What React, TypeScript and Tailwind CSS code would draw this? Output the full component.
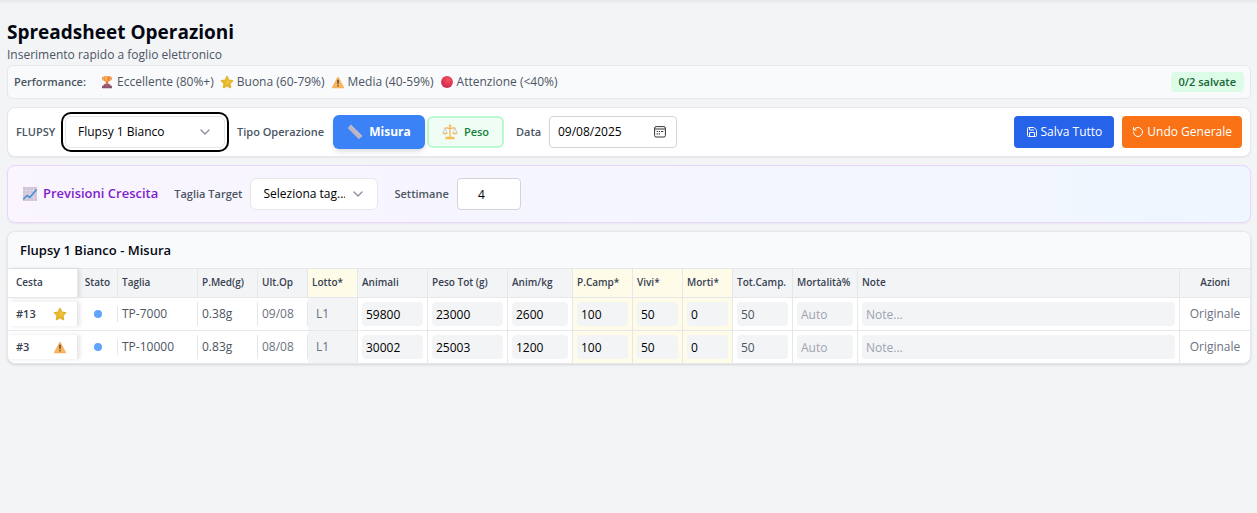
import type { ReactNode, SelectHTMLAttributes } from "react";
import { ChevronDown, RotateCcw, Save } from "lucide-react";

const Trophy = () => (
  <svg viewBox="0 0 16 16" className="size-3.5 shrink-0" aria-hidden="true">
    <path d="M4.500 3.200H2.800c0 1.800.8 2.800 2.600 3M11.500 3.200h1.700c0 1.800-.8 2.800-2.600 3" fill="none" stroke="#f08a3c" strokeWidth="1.200" />
    <path d="M4 1.500h8c0 4-1 6-3.200 6.600H7.200C5 7.500 4 5.500 4 1.500Z" fill="#f08a3a" />
    <path d="M5.200 2h3v5C6.200 6.500 5.200 4.800 5.200 2Z" fill="#ffb84a" />
    <path d="M7 8h2l1.200 3.200H5.800Z" fill="#e0703c" />
    <path d="M4.200 10.600h7.600v1.700h1.900V15H2.300v-2.700h1.900Z" fill="#8a5070" />
    <path d="M6.200 12h3.600v1.200H6.200Z" fill="#b87070" />
  </svg>
);

const StarIcon = () => (
  <svg viewBox="0 0 16 16" className="size-3.5 shrink-0" aria-hidden="true">
    <path
      d="M8 1.900l1.900 4.100 4.400.6-3.200 3.100.8 4.500L8 12.100l-3.900 2.100.8-4.500L1.700 6.600 6.100 6Z"
      fill="#e9bd2f"
      stroke="#e3b32e"
      strokeWidth="1.900"
      strokeLinejoin="round"
    />
    <path d="M8 3l1.300 3.500 3.500.6-3 2.400L8 9Z" fill="#efc63c" />
  </svg>
);

const Warning = () => (
  <svg viewBox="0 0 16 16" className="size-3.5 shrink-0" aria-hidden="true">
    <path d="M8 2.600l6.300 11.800H1.700Z" fill="#fbb55c" stroke="#f8b05c" strokeWidth="1.200" strokeLinejoin="round" />
    <path d="M7.100 5.500h1.800l-.3 5h-1.200Z" fill="#4a3b3b" />
    <circle cx="8" cy="12.200" r=".9" fill="#4a3b3b" />
  </svg>
);

const RedDot = () => (
  <svg viewBox="0 0 16 16" className="size-3.5 shrink-0" aria-hidden="true">
    <defs>
      <radialGradient id="red-dot" cx=".6" cy=".3" r=".8">
        <stop offset="0" stopColor="#f4505f" />
        <stop offset="1" stopColor="#c9234f" />
      </radialGradient>
    </defs>
    <circle cx="8" cy="8" r="6.800" fill="url(#red-dot)" />
  </svg>
);

const Ruler = () => (
  <svg viewBox="0 0 16 16" className="size-4 shrink-0" aria-hidden="true">
    <path d="M3.900.8 15.300 12l-3.400 3.300L.6 4Z" fill="#bcb4c6" />
    <path d="M3.900.8 15.300 12l-1 .9L3 1.700Z" fill="#c6bfcf" />
    <path d="M5 3.700l1-1M7 5.600l1-1M9 7.600l1-1M11 9.600l1-1M13 11.500l1-1" stroke="#a398ae" strokeWidth=".5" />
  </svg>
);

const Scales = () => (
  <svg viewBox="0 0 16 16" className="size-4 shrink-0" aria-hidden="true">
    <path d="M7.300 2h1.400v11H7.300Z" fill="#f5bb62" />
    <circle cx="8" cy="1.800" r="1.300" fill="#f7c164" />
    <path d="M2.500 4.200C5 3 6.500 4.800 8 4.300c1.500.5 3-1.300 5.500-.1" fill="none" stroke="#f0b35c" strokeWidth="1.100" />
    <path d="M3 4.200.9 9M3 4.200 5.300 9M13 4.200 10.700 9M13 4.200 15.100 9" fill="none" stroke="#c0b4bb" strokeWidth=".7" />
    <path d="M.3 8.800h5.500c-.4 2.300-5.100 2.300-5.500 0ZM10.200 8.800h5.500c-.4 2.300-5.100 2.300-5.500 0Z" fill="#f3b667" />
    <path d="M4 12.800h8l1 2.400H3Z" fill="#f9bd54" />
  </svg>
);

const Chart = () => (
  <svg viewBox="0 0 16 16" className="size-4 shrink-0" aria-hidden="true">
    <rect x="1" y="1" width="14" height="14" fill="#cfc4da" />
    <path d="M1 4.500h14M1 8h14M1 11.500h14M4.500 1v14M8 1v14M11.500 1v14" stroke="#e2d9e8" strokeWidth=".7" />
    <path d="M1.200 13.300 5.200 9.500l2.600 1.900L14.600 3.500" fill="none" stroke="#3b8fd0" strokeWidth="1.500" />
  </svg>
);

const Calendar = () => (
  <svg viewBox="0 0 12 12" className="size-3" aria-hidden="true">
    <rect x=".6" y=".6" width="10.800" height="10.400" rx="1.500" fill="none" stroke="#333" strokeWidth="1" />
    <path d="M.6 3h10.800" stroke="#333" strokeWidth="1" />
    <path d="M2.700 5.500h1.200M4.800 5.500h1.200M7 5.500h2.200M2.700 7.900h1.200M4.800 7.900h1.200" stroke="#333" strokeWidth="1.100" />
  </svg>
);

type PickerProps = SelectHTMLAttributes<HTMLSelectElement> & { children: ReactNode };

function Picker({ className = "", children, ...rest }: PickerProps) {
  return (
    <span className="grid items-center">
      <select
        {...rest}
        className={`col-start-1 row-start-1 h-8 appearance-none rounded-md border border-[#e5e7eb] bg-white pl-3 pr-8 text-xs text-black outline-none ${className}`}
      >
        {children}
      </select>
      <ChevronDown
        aria-hidden="true"
        strokeWidth={2}
        className="pointer-events-none col-start-1 row-start-1 mr-3 size-4 justify-self-end text-gray-500/80"
      />
    </span>
  );
}

const legend = [
  { icon: <Trophy />, text: "Eccellente (80%+)" },
  { icon: <StarIcon />, text: "Buona (60-79%)" },
  { icon: <Warning />, text: "Media (40-59%)" },
  { icon: <RedDot />, text: "Attenzione (<40%)" },
];

const columns = [
  { label: "Cesta", col: "w-[70px]", th: "bg-white pl-2 shadow-[2px_0_4px_rgba(0,0,0,0.1)]" },
  { label: "Stato", col: "w-10", th: "text-center" },
  { label: "Taglia", col: "w-20", th: "pl-1" },
  { label: "P.Med(g)", col: "w-[60px]", th: "pl-1" },
  { label: "Ult.Op", col: "w-[50px]", th: "pl-1" },
  { label: "Lotto*", col: "w-[50px]", th: "bg-[#fefce8] pl-1" },
  { label: "Animali", col: "w-[70px]", th: "pl-1" },
  { label: "Peso Tot (g)", col: "w-20", th: "pl-1" },
  { label: "Anim/kg", col: "w-[65px]", th: "pl-1" },
  { label: "P.Camp*", col: "w-[60px]", th: "bg-[#fefce8] pl-1" },
  { label: "Vivi*", col: "w-[50px]", th: "bg-[#fefce8] pl-1" },
  { label: "Morti*", col: "w-[50px]", th: "bg-[#fefce8] pl-1" },
  { label: "Tot.Camp.", col: "w-[60px]", th: "pl-1" },
  { label: "Mortalità%", col: "w-[65px]", th: "pl-1" },
  { label: "Note", col: "", th: "pl-1" },
  { label: "Azioni", col: "w-[70px]", th: "text-center" },
];

const rows = [
  { id: "#13", icon: <StarIcon />, size: "TP-7000", avg: "0.38g", last: "09/08", lot: "L1", values: ["59800", "23000", "2600", "100", "50", "0", "50", "", ""] },
  { id: "#3", icon: <Warning />, size: "TP-10000", avg: "0.83g", last: "08/08", lot: "L1", values: ["30002", "25003", "1200", "100", "50", "0", "50", "", ""] },
];

const fields = [
  { label: "Animali", td: "", input: "text-black" },
  { label: "Peso totale", td: "", input: "text-black" },
  { label: "Animali per kg", td: "", input: "text-black" },
  { label: "Peso campione", td: "bg-[#fefce8]", input: "text-black" },
  { label: "Vivi", td: "bg-[#fefce8]", input: "text-black" },
  { label: "Morti", td: "bg-[#fefce8]", input: "text-black" },
  { label: "Totale campione", td: "", input: "text-[#4b5563]" },
  { label: "Mortalità", td: "", input: "text-[#4b5563]", placeholder: "Auto" },
  { label: "Note", td: "", input: "text-[#4b5563]", placeholder: "Note..." },
];

export default function App() {
  return (
    <div className="min-h-screen bg-[#f3f4f6] font-['Open_Sans','Noto_Sans',sans-serif] text-xs text-[#4b5563]">
      <div className="h-1 bg-linear-to-b from-[#e5e7eb] to-[#f3f4f6]" />
      <main className="flex flex-col gap-2 pt-4 pr-1.5 pl-[7px]">
        <div>
          <h1 className="text-[19px] leading-6 font-bold text-gray-950">Spreadsheet Operazioni</h1>
          <p className="pt-0.5 leading-[18px]">Inserimento rapido a foglio elettronico</p>
          <div className="mt-px flex h-[34px] items-center rounded-md border border-[#e5e7eb] bg-[#f9fafb] px-1.5">
            <span className="mr-3 w-[74px] text-[11px] font-semibold">Performance:</span>
            <ul className="flex gap-1.5">
              {legend.map((l) => (
                <li key={l.text} className="flex items-center gap-[3px]">
                  {l.icon}
                  {l.text}
                </li>
              ))}
            </ul>
            <span className="ml-auto rounded bg-[#dcfce7] px-2 text-[11px] leading-5 font-semibold text-[#166534]">0/2 salvate</span>
          </div>
        </div>

        <section className="flex h-[50px] items-center rounded-lg border border-[#e5e7eb] bg-white px-2 shadow-xs">
          <label htmlFor="flupsy" className="mr-2 w-[41px] text-[11px] font-semibold">FLUPSY</label>
          <Picker id="flupsy" className="w-40 ring-2 ring-black ring-offset-2">
            <option>Flupsy 1 Bianco</option>
          </Picker>
          <span className="mr-1.5 ml-3 w-[90px] text-[11px] font-semibold whitespace-nowrap">Tipo Operazione</span>
          <button className="flex h-[34px] w-[92px] items-center justify-center gap-1.5 rounded-md bg-[#3b82f6] font-bold text-white shadow-md">
            <Ruler />
            Misura
          </button>
          <button className="ml-0.5 flex h-8 w-[77px] items-center justify-center gap-1.5 rounded-md border-2 border-[#bbf7d0] bg-[#f0fdf4] text-[11px] font-semibold text-[#15803d]">
            <Scales />
            Peso
          </button>
          <label htmlFor="data" className="mr-1.5 ml-3 w-[27px] text-[11px] font-semibold">Data</label>
          <div className="flex h-8 w-32 items-center rounded border border-[#d1d5db] bg-white pr-2.5 pl-2">
            <input id="data" defaultValue="09/08/2025" className="min-w-0 flex-1 text-black outline-none" />
            <button aria-label="Apri calendario">
              <Calendar />
            </button>
          </div>
          <button className="ml-auto flex h-8 items-center gap-[3px] rounded bg-[#2563eb] px-3 text-white">
            <Save className="size-3" aria-hidden="true" />
            Salva Tutto
          </button>
          <button className="ml-2 flex h-8 items-center gap-[3px] rounded bg-[#f97316] px-2.5 text-white">
            <RotateCcw className="size-3" aria-hidden="true" />
            Undo Generale
          </button>
        </section>

        <section className="flex h-[58px] items-center rounded-lg border border-[#e9d5ff] bg-linear-to-r/srgb from-[#faf5ff] to-[#eff6ff] px-3.5 shadow-xs">
          <h2 className="mr-4 flex items-center gap-[5px] text-[13px] font-semibold text-[#7e22ce]">
            <Chart />
            Previsioni Crescita
          </h2>
          <label htmlFor="target" className="mr-2 text-[11px] font-semibold">Taglia Target</label>
          <Picker id="target" className="w-32">
            <option>Seleziona tag...</option>
          </Picker>
          <label htmlFor="weeks" className="mr-2 ml-4 text-[11px] font-semibold">Settimane</label>
          <input
            id="weeks"
            type="number"
            defaultValue={4}
            className="h-8 w-16 appearance-none rounded border border-[#d1d5db] bg-white px-2 text-center text-black outline-none"
          />
        </section>

        <section className="overflow-hidden rounded-lg border border-[#e5e7eb] bg-white shadow-sm">
          <h2 className="border-b border-[#e5e7eb] bg-[#f9fafb] px-3 pt-2 pb-[7px] text-[13px] leading-[21px] font-semibold text-gray-950">
            Flupsy 1 Bianco - Misura
          </h2>
          <table className="w-full table-fixed border-separate border-spacing-0">
            <colgroup>
              {columns.map((c) => (
                <col key={c.label} className={c.col} />
              ))}
            </colgroup>
            <thead>
              <tr className="bg-[#f3f4f6] text-left text-[10px] text-[#374151]">
                {columns.map((c) => (
                  <th
                    key={c.label}
                    className={`h-[29px] border-r border-b border-[#e5e7eb] font-semibold whitespace-nowrap last:border-r-0 ${c.th}`}
                  >
                    {c.label}
                  </th>
                ))}
              </tr>
            </thead>
            <tbody className="[&>tr:not(:last-child)>td]:border-b">
              {rows.map((r) => (
                <tr key={r.id} className="h-[33px] last:h-8 [&>td]:border-[#e5e7eb]">
                  <td>
                    <div className="flex h-6 items-center justify-between border-r border-[#e5e7eb] pr-2.5 pl-2 text-[11px] font-semibold text-[#374151] shadow-[2px_0_4px_rgba(0,0,0,0.1)]">
                      {r.id}
                      {r.icon}
                    </div>
                  </td>
                  <td>
                    <div className="flex h-4 items-center justify-center border-r border-[#e5e7eb]">
                      <span className="size-2 rounded-full bg-[#60a5fa]" />
                    </div>
                  </td>
                  <td>
                    <div className="h-6 border-r border-[#e5e7eb] pl-1 leading-6">{r.size}</div>
                  </td>
                  <td>
                    <div className="h-6 border-r border-[#e5e7eb] pl-1 leading-6">{r.avg}</div>
                  </td>
                  <td>
                    <div className="h-6 border-r border-[#e5e7eb] pl-1 leading-6 text-[#6b7280]">{r.last}</div>
                  </td>
                  <td className="border-r bg-[#f3f4f6] pl-2 text-[#6b7280]">{r.lot}</td>
                  {fields.map((f, i) => (
                    <td key={f.label} className={`border-r px-1 ${f.td}`}>
                      <input
                        aria-label={`${f.label} ${r.id}`}
                        defaultValue={r.values[i]}
                        placeholder={f.placeholder}
                        className={`block h-6 w-full rounded bg-[#f3f4f6] px-1 outline-none placeholder:text-[#9ca3af] ${f.input}`}
                      />
                    </td>
                  ))}
                  <td className="text-center text-[#6b7280]">Originale</td>
                </tr>
              ))}
            </tbody>
          </table>
        </section>
      </main>
    </div>
  );
}
